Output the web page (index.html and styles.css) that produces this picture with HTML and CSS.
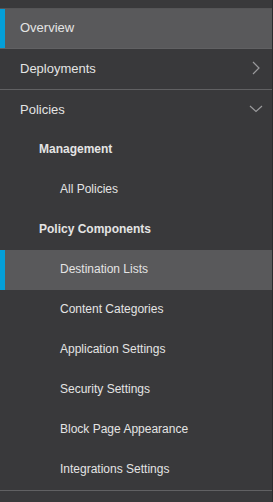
FILE: index.html
```html
<!DOCTYPE html>
<html>
<head>
<meta charset="utf-8">
<link rel="stylesheet" href="styles.css">
</head>
<body>
<nav class="sidebar">
  <div class="item top active">Overview</div>
  <div class="item top">
    <span>Deployments</span>
    <svg class="chev" width="8" height="14" viewBox="0 0 8 14"><path d="M1 1 L7 7 L1 13" fill="none" stroke="#9a9a9c" stroke-width="1.2"/></svg>
  </div>
  <div class="group">
    <div class="item">
      <span>Policies</span>
      <svg class="chev down" width="14" height="8" viewBox="0 0 14 8"><path d="M1 1 L7 6.5 L13 1" fill="none" stroke="#9a9a9c" stroke-width="1.2"/></svg>
    </div>
    <div class="item head">Management</div>
    <div class="item sub">All Policies</div>
    <div class="item head">Policy Components</div>
    <div class="item sub active">Destination Lists</div>
    <div class="item sub">Content Categories</div>
    <div class="item sub">Application Settings</div>
    <div class="item sub">Security Settings</div>
    <div class="item sub">Block Page Appearance</div>
    <div class="item sub">Integrations Settings</div>
  </div>
</nav>
</body>
</html>
```
FILE: styles.css
```css
html, body {
  margin: 0;
  padding: 0;
  background: #39393b;
}
body {
  font-family: "Liberation Sans", Arial, sans-serif;
  font-size: 13px;
  color: #e4e4e4;
}
.sidebar {
  width: 272px;
  height: 502px;
  border-right: 1px solid #2b2b2d;
  padding-top: 8px;
  box-sizing: content-box;
}
.sidebar > .item:first-child {
  border-top: 1px solid #555557;
}
.item {
  height: 40px;
  box-sizing: border-box;
  display: flex;
  align-items: center;
  justify-content: space-between;
  padding: 0 9px 2px 20px;
  position: relative;
}
.item.top, .group {
  border-bottom: 1px solid #616163;
}
.item.top {
  height: 41px;
}
.item.active {
  background: #59595b;
}
.item.active::before {
  content: "";
  position: absolute;
  left: 0;
  top: 0;
  bottom: 0;
  width: 5px;
  background: #049fd9;
}
.item.head {
  font-weight: bold;
  font-size: 12px;
  padding-left: 39px;
}
.item.sub {
  font-size: 12px;
  padding-left: 60px;
}
.chev {
  display: block;
  margin-right: 3px;
}
.chev.down {
  margin-right: 0;
}
```
